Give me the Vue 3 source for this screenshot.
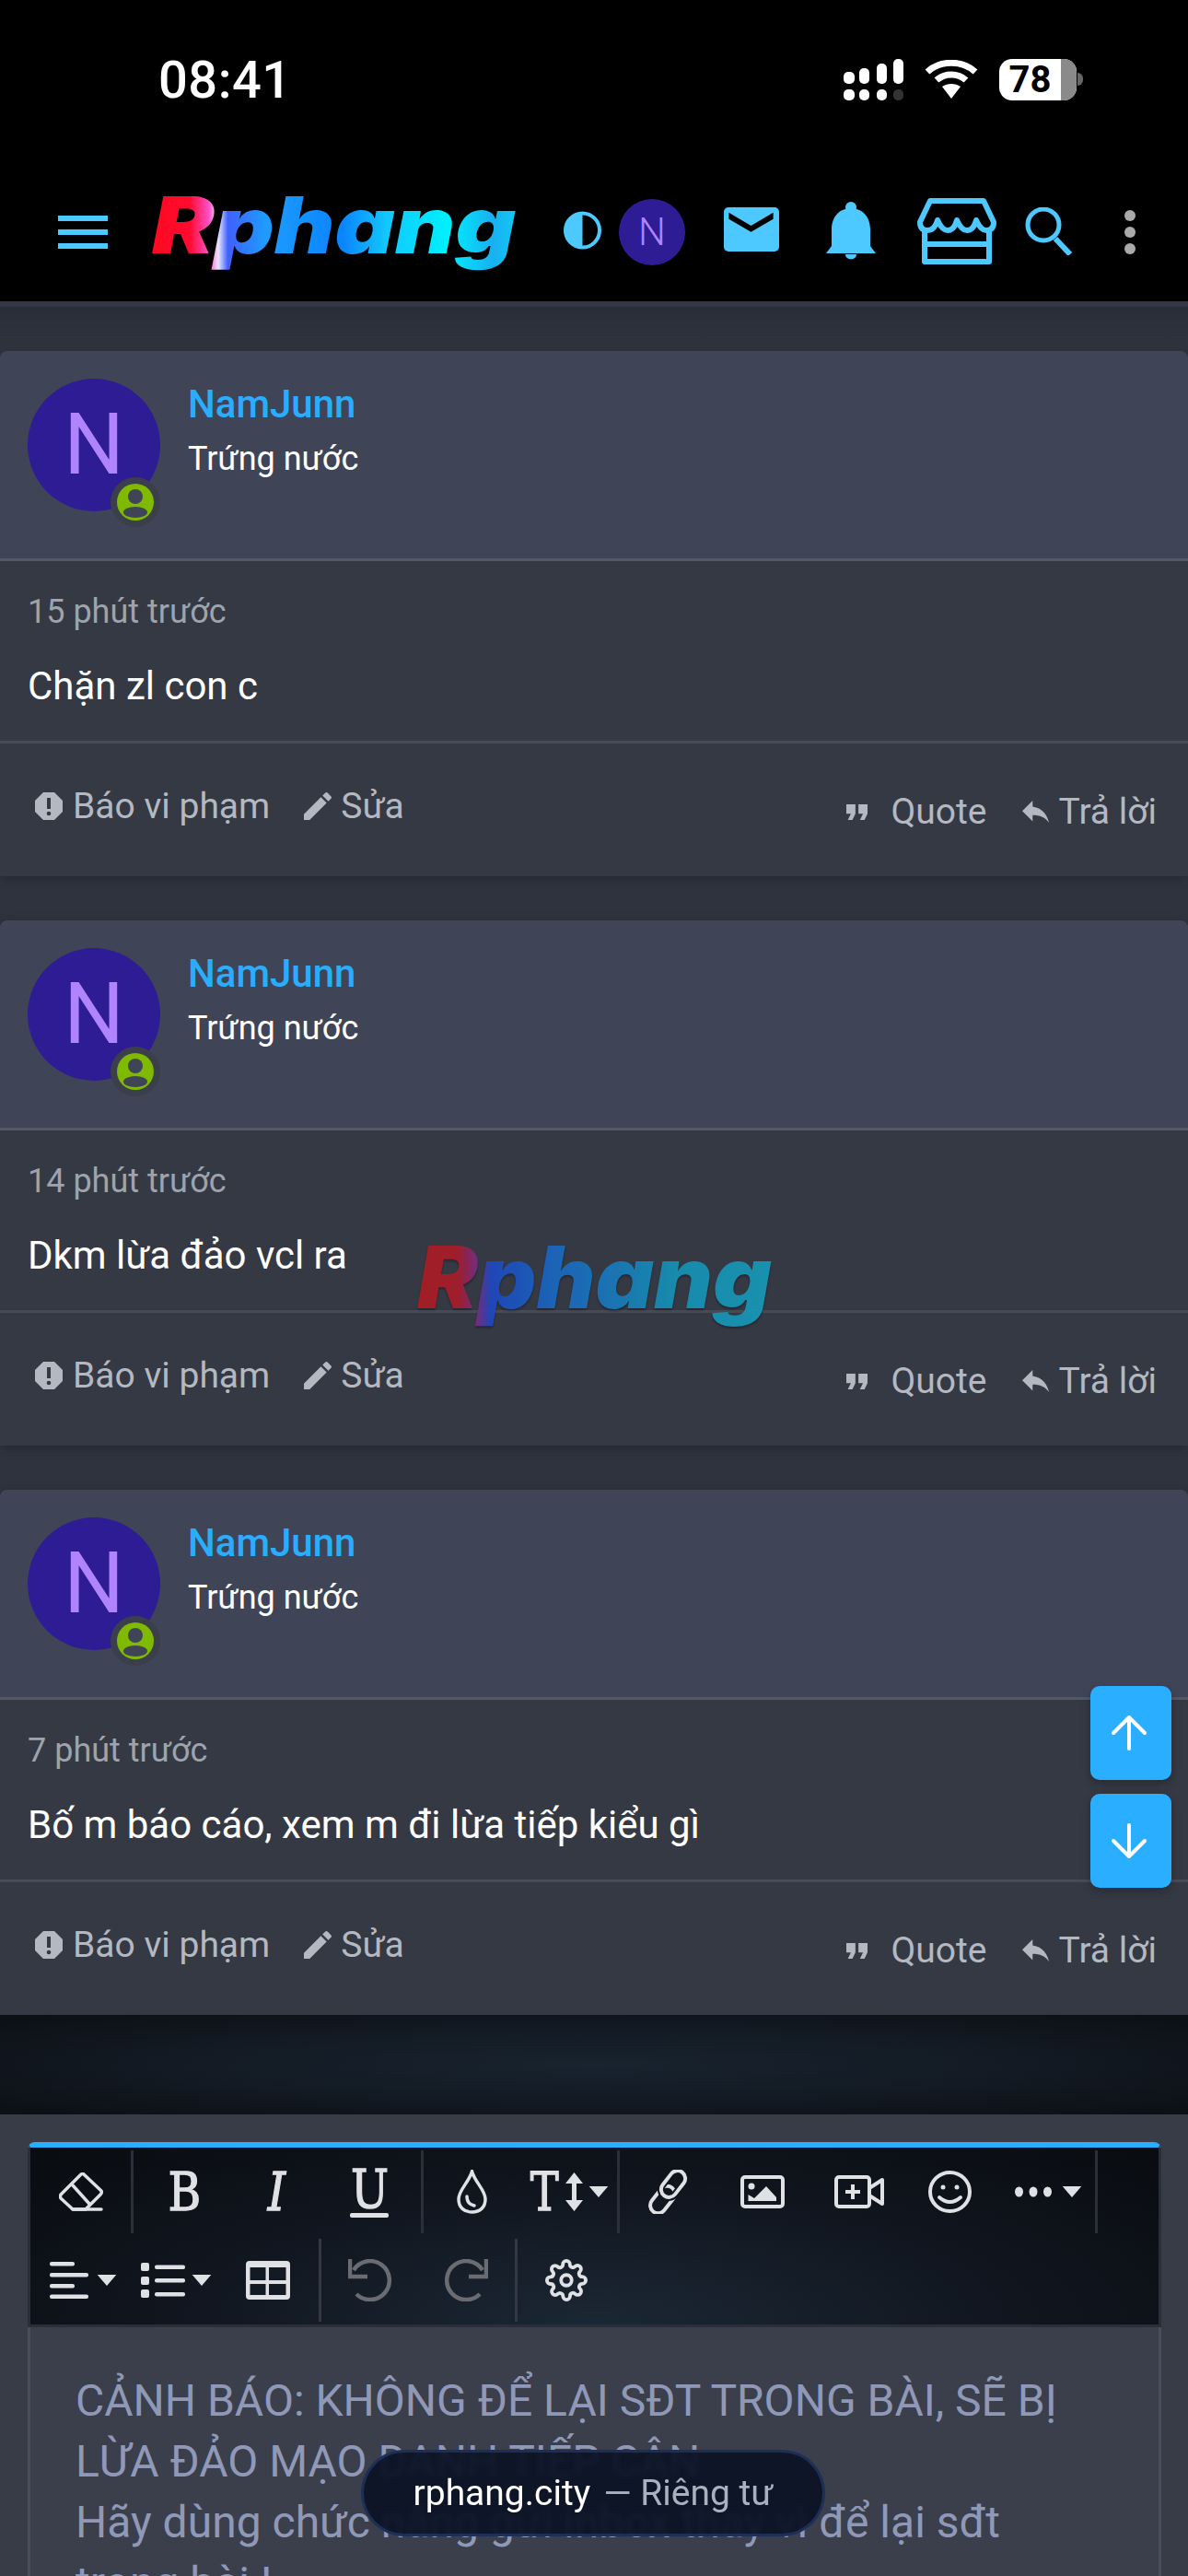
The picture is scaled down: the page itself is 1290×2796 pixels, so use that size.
<script setup>
const posts = [
  { id: 1, time: '15 phút trước', text: 'Chặn zl con c' },
  { id: 2, time: '14 phút trước', text: 'Dkm lừa đảo vcl ra' },
  { id: 3, time: '7 phút trước', text: 'Bố m báo cáo, xem m đi lừa tiếp kiểu gì' }
]
const gearPath = 'M19.4 15a1.65 1.65 0 0 0 .33 1.82l.06.06a2 2 0 0 1 0 2.83 2 2 0 0 1-2.83 0l-.06-.06a1.65 1.65 0 0 0-1.82-.33 1.65 1.65 0 0 0-1 1.51V21a2 2 0 0 1-2 2 2 2 0 0 1-2-2v-.09A1.65 1.65 0 0 0 9 19.4a1.65 1.65 0 0 0-1.82.33l-.06.06a2 2 0 0 1-2.83 0 2 2 0 0 1 0-2.83l.06-.06a1.65 1.65 0 0 0 .33-1.82 1.65 1.65 0 0 0-1.51-1H3a2 2 0 0 1-2-2 2 2 0 0 1 2-2h.09A1.65 1.65 0 0 0 4.6 9a1.65 1.65 0 0 0-.33-1.82l-.06-.06a2 2 0 0 1 0-2.83 2 2 0 0 1 2.83 0l.06.06a1.65 1.65 0 0 0 1.82.33H9a1.65 1.65 0 0 0 1-1.51V3a2 2 0 0 1 2-2 2 2 0 0 1 2 2v.09a1.65 1.65 0 0 0 1 1.51 1.65 1.65 0 0 0 1.82-.33l.06-.06a2 2 0 0 1 2.83 0 2 2 0 0 1 0 2.83l-.06.06a1.65 1.65 0 0 0-.33 1.82V9a1.65 1.65 0 0 0 1.51 1H21a2 2 0 0 1 2 2 2 2 0 0 1-2 2h-.09a1.65 1.65 0 0 0-1.51 1z'
</script>

<template>
  <div class="page">
    <div class="status">
      <span class="time">08:41</span>
      <div class="status-icons">
        <svg width="65" height="45" viewBox="0 0 65 45" fill="#fff">
          <rect x="0" y="14" width="12" height="13" rx="5"/>
          <rect x="17" y="10" width="11" height="17" rx="5"/>
          <rect x="36" y="5" width="11" height="22" rx="5"/>
          <rect x="54" y="0" width="11" height="27" rx="5"/>
          <rect x="0" y="33" width="12" height="12" rx="5"/>
          <rect x="17" y="33" width="11" height="12" rx="5"/>
          <rect x="36" y="33" width="11" height="12" rx="5"/>
          <rect x="54" y="33" width="11" height="12" rx="5" fill="#333"/>
        </svg>
        <svg class="wifi" width="58" height="42" viewBox="0 0 58 42" fill="none" stroke="#fff" stroke-width="7">
          <path d="M3 13 C17 0 41 0 55 13"/>
          <path d="M13 22 C22 14 36 14 45 22"/>
          <path d="M29 42 L19 29 C25 25 33 25 39 29 Z" fill="#fff" stroke="none"/>
        </svg>
        <div class="battery">
          <span class="battery-num">78</span>
          <span class="battery-rest"></span>
        </div>
        <span class="battery-nub"></span>
      </div>
    </div>

    <header class="topbar">
      <div class="burger"><i></i><i></i><i></i></div>
      <div class="logo-box"><span class="logo">Rphang</span></div>
      <svg class="ic-contrast" width="41" height="42" viewBox="0 0 41 42">
        <circle cx="20.5" cy="21" r="18.5" fill="none" stroke="#4dc9ff" stroke-width="4"/>
        <path d="M20.5 2 A18.5 19 0 0 0 20.5 40 Z" fill="#4dc9ff"/>
      </svg>
      <div class="top-avatar">N</div>
      <svg class="ic-mail" width="60" height="48" viewBox="0 0 60 48">
        <rect width="60" height="48" rx="5" fill="#4dc9ff"/>
        <path d="M5.4 5.7 L29.5 20 L53.6 5.7 V12.7 L29.5 26.7 L5.4 12.7 Z" fill="#000"/>
      </svg>
      <svg class="ic-bell" width="54" height="63" viewBox="0 0 54 63" fill="#4dc9ff">
        <circle cx="27" cy="6" r="6"/>
        <path d="M6 48 V30 C6 16 15 7 27 7 C39 7 48 16 48 30 V48 L54 56 H0 Z"/>
        <path d="M21 57 H33 C33 64 21 64 21 57 Z"/>
      </svg>
      <svg class="ic-store" width="86" height="72" viewBox="0 0 86 72" fill="none" stroke="#4dc9ff" stroke-width="6" stroke-linejoin="round">
        <path d="M3 26 Q3 35 11 35 Q19 35 22 24 Q27 35 33 35 Q40 35 43 24 Q48 35 54 35 Q61 35 64 24 Q69 35 75 35 Q83 35 83 26 L72 3 H14 Z"/>
        <path d="M8 36 V69 H78 V36 M8 50 H78"/>
      </svg>
      <svg class="ic-search" width="52" height="52" viewBox="0 0 52 52" fill="none" stroke="#4dc9ff">
        <ellipse cx="20" cy="19" rx="17" ry="17" stroke-width="5"/>
        <path d="M33 34 L49 51" stroke-width="6"/>
      </svg>
      <svg class="ic-dots" width="12" height="48" viewBox="0 0 12 48" fill="#aaa">
        <circle cx="6" cy="6" r="6"/><circle cx="6" cy="24" r="6"/><circle cx="6" cy="42" r="6"/>
      </svg>
    </header>

    <main class="thread">
      <article v-for="p in posts" :key="p.id" class="post">
        <div class="post-head">
          <div class="avatar">
            N
            <span class="badge">
              <svg width="40" height="40" viewBox="0 0 40 40">
                <circle cx="20" cy="20" r="20" fill="#7fba00"/>
                <circle cx="20" cy="14" r="8" fill="#3f4557"/>
                <ellipse cx="20" cy="31" rx="13" ry="6" fill="#3f4557"/>
              </svg>
            </span>
          </div>
          <div class="user">
            <div class="name">NamJunn</div>
            <div class="rank">Trứng nước</div>
          </div>
        </div>
        <div class="post-body">
          <div class="when">{{ p.time }}</div>
          <div class="msg">{{ p.text }}</div>
        </div>
        <div class="post-foot">
          <div class="acts acts-left">
            <span class="act">
              <svg width="30" height="30" viewBox="0 0 30 30">
                <path d="M9 0 H21 L30 9 V21 L21 30 H9 L0 21 V9 Z" fill="#b4b8c0"/>
                <rect x="13" y="6" width="4" height="12" fill="#353944"/>
                <circle cx="15" cy="23" r="2.3" fill="#353944"/>
              </svg>
              Báo vi phạm
            </span>
            <span class="act act-edit">
              <svg width="30" height="30" viewBox="3 3 18 18" fill="#b4b8c0">
                <path d="M3 17.25V21h3.75L17.81 9.94l-3.75-3.75L3 17.25zM20.71 7.04c.39-.39.39-1.02 0-1.41l-2.34-2.34c-.39-.39-1.02-.39-1.41 0l-1.83 1.83 3.75 3.75 1.83-1.83z"/>
              </svg>
              Sửa
            </span>
          </div>
          <div class="acts acts-right">
            <span class="act act-quote">
              <svg width="23" height="17" viewBox="5 7 14 10" preserveAspectRatio="none" fill="#b4b8c0">
                <path d="M6 17h3l2-4V7H5v6h3zm8 0h3l2-4V7h-6v6h3z"/>
              </svg>
              Quote
            </span>
            <span class="act act-reply">
              <svg width="29" height="24" viewBox="3 5 18 15" preserveAspectRatio="none" fill="#b4b8c0">
                <path d="M10 9V5l-7 7 7 7v-4.1c5 0 8.5 1.6 11 5.1-1-5-4-10-11-11z"/>
              </svg>
              Trả lời
            </span>
          </div>
        </div>
      </article>
    </main>

    <div class="band"></div>

    <section class="panel">
      <div class="editor">
        <div class="toolbar">
          <div class="tb-row">
            <div class="tb-group">
              <span class="tb w109">
                <svg width="48" height="42" viewBox="0 0 48 42" fill="none" stroke="#e0e1e5" stroke-width="3.5" stroke-linejoin="round" stroke-linecap="round">
                  <path d="M27 2 L46 20 Q47 22 45 24 L29 40 H15 L2 28 Q1 26 2 24 L24 2 Q26 1 27 2 Z"/>
                  <path d="M15 14 L33 34"/>
                  <path d="M15 40 H46"/>
                </svg>
              </span>
            </div>
            <div class="tb-group">
              <span class="tb w110"><span class="glyph">B</span></span>
              <span class="tb w90"><span class="glyph glyph-i">I</span></span>
              <span class="tb w112 u-tool"><span class="glyph">U</span><i class="u-line"></i></span>
            </div>
            <div class="tb-group">
              <span class="tb w104">
                <svg width="33" height="48" viewBox="0 0 33 48" fill="none" stroke="#e0e1e5" stroke-width="3.5" stroke-linecap="round">
                  <path d="M16.5 2 C13 14 2 22 2 32 C2 41 8 46 16.5 46 C25 46 31 41 31 32 C31 22 20 14 16.5 2 Z"/>
                  <path d="M11 29 C11 35 14 38 19 39"/>
                </svg>
              </span>
              <span class="tb w106 size-tool">
                <span class="glyph glyph-t">T</span>
                <svg width="19" height="42" viewBox="0 0 19 42" fill="#e0e1e5">
                  <path d="M9.5 0 L19 12 H12 V30 H19 L9.5 42 L0 30 H7 V12 H0 Z"/>
                </svg>
                <svg width="24" height="12" viewBox="0 0 24 14" fill="#e0e1e5"><path d="M0 0 H24 L12 14 Z"/></svg>
              </span>
            </div>
            <div class="tb-group">
              <span class="tb w106">
                <svg class="ic-link" width="49" height="48" viewBox="0 0 49 48" fill="none" stroke-width="4">
                  <rect x="3" y="24" width="33" height="17" rx="8.5" transform="rotate(-52 19.5 32.5)" stroke="#e0e1e5"/>
                  <rect x="15" y="7" width="32" height="17" rx="8.5" transform="rotate(-52 31 15.5)" stroke="#10151e" stroke-width="8"/>
                  <rect x="15" y="7" width="32" height="17" rx="8.5" transform="rotate(-52 31 15.5)" stroke="#e0e1e5"/>
                </svg>
              </span>
              <span class="tb w98">
                <svg width="48" height="36" viewBox="0 0 48 36">
                  <rect x="2" y="2" width="44" height="32" rx="3" fill="none" stroke="#e0e1e5" stroke-width="4"/>
                  <circle cx="12" cy="12" r="3.5" fill="#e0e1e5"/>
                  <path d="M8.5 28 V21 L15 25 L28 12 L39 24 V28 Z" fill="#e0e1e5"/>
                </svg>
              </span>
              <span class="tb w112">
                <svg width="54" height="36" viewBox="0 0 54 36" fill="none" stroke="#e0e1e5" stroke-width="4" stroke-linejoin="round">
                  <rect x="2" y="2" width="36" height="32" rx="3"/>
                  <path d="M38 14 L52 5 V31 L38 22"/>
                  <path d="M20 10 V26 M12 18 H28"/>
                </svg>
              </span>
              <span class="tb w84">
                <svg width="47" height="46" viewBox="0 0 47 46" fill="none" stroke="#e0e1e5" stroke-width="4" stroke-linecap="round">
                  <ellipse cx="23.5" cy="23" rx="21.5" ry="21"/>
                  <circle cx="16" cy="18" r="2.5" fill="#e0e1e5" stroke="none"/>
                  <circle cx="31" cy="18" r="2.5" fill="#e0e1e5" stroke="none"/>
                  <path d="M12 29 Q23.5 39 35 29"/>
                </svg>
              </span>
              <span class="tb w116 more-tool">
                <svg width="40" height="12" viewBox="0 0 40 12" fill="#e0e1e5">
                  <ellipse cx="4.5" cy="6" rx="4.5" ry="5.5"/><ellipse cx="20" cy="6" rx="4.5" ry="5.5"/><ellipse cx="35.5" cy="6" rx="4.5" ry="5.5"/>
                </svg>
                <svg width="24" height="12" viewBox="0 0 24 14" fill="#e0e1e5"><path d="M0 0 H24 L12 14 Z"/></svg>
              </span>
            </div>
          </div>
          <div class="tb-row">
            <div class="tb-group">
              <span class="tb w116 drop-tool">
                <svg width="42" height="40" viewBox="0 0 42 40" fill="#e0e1e5">
                  <rect width="27" height="4.5" rx="2"/><rect y="12" width="42" height="4.5" rx="2"/>
                  <rect y="24" width="27" height="4.5" rx="2"/><rect y="35.5" width="42" height="4.5" rx="2"/>
                </svg>
                <svg width="24" height="12" viewBox="0 0 24 14" fill="#e0e1e5"><path d="M0 0 H24 L12 14 Z"/></svg>
              </span>
              <span class="tb w86 list-tool">
                <svg width="48" height="40" viewBox="0 0 48 40" fill="#e0e1e5">
                  <rect y="1" width="9" height="9" rx="2"/><rect y="16" width="9" height="9" rx="2"/><rect y="30" width="9" height="9" rx="2"/>
                  <rect x="15" y="3.5" width="33" height="4.5" rx="2"/><rect x="15" y="18" width="33" height="4.5" rx="2"/><rect x="15" y="33" width="33" height="4.5" rx="2"/>
                </svg>
                <svg width="24" height="12" viewBox="0 0 24 14" fill="#e0e1e5"><path d="M0 0 H24 L12 14 Z"/></svg>
              </span>
              <span class="tb w111">
                <svg width="48" height="42" viewBox="0 0 48 42">
                  <rect width="48" height="42" rx="4" fill="#e0e1e5"/>
                  <rect x="4.5" y="7" width="17" height="14" fill="#141a24"/><rect x="25" y="7" width="18.5" height="14" fill="#141a24"/>
                  <rect x="4.5" y="25" width="17" height="12" fill="#141a24"/><rect x="25" y="25" width="18.5" height="12" fill="#141a24"/>
                </svg>
              </span>
            </div>
            <div class="tb-group">
              <span class="tb w105">
                <svg width="47" height="46" viewBox="0 0 47 46" fill="none" stroke="#6a6c72" stroke-width="4.5">
                  <path d="M2 0 V19 H21"/>
                  <path d="M6 12 A21 21 0 1 1 9 38"/>
                </svg>
              </span>
              <span class="tb w105">
                <svg width="47" height="46" viewBox="0 0 47 46" fill="none" stroke="#6a6c72" stroke-width="4.5">
                  <path d="M45 0 V19 H26"/>
                  <path d="M41 12 A21 21 0 1 0 38 38"/>
                </svg>
              </span>
            </div>
            <div class="tb-group tb-last">
              <span class="tb w106">
                <svg width="46" height="46" viewBox="0 0 24 24" fill="none" stroke="#e0e1e5" stroke-width="2">
                  <circle cx="12" cy="12" r="3"/>
                  <path :d="gearPath"/>
                </svg>
              </span>
            </div>
          </div>
        </div>
        <div class="placeholder">
          <p>CẢNH BÁO: KHÔNG ĐỂ LẠI SĐT TRONG BÀI, SẼ BỊ LỪA ĐẢO MẠO DANH TIẾP CẬN</p>
          <p>Hãy dùng chức năng gửi inbox thay vì để lại sđt trong bài !</p>
        </div>
      </div>
    </section>

    <div class="mark-box"><span class="logo logo-mark">Rphang</span></div>

    <div class="jump">
      <button class="jump-btn" aria-label="Lên">
        <svg width="40" height="40" viewBox="0 0 40 40" fill="none" stroke="#fff" stroke-width="4" stroke-linecap="round" stroke-linejoin="round">
          <path d="M20 3 V37 M3 20 L20 3 L37 20"/>
        </svg>
      </button>
      <button class="jump-btn" aria-label="Xuống">
        <svg width="40" height="40" viewBox="0 0 40 40" fill="none" stroke="#fff" stroke-width="4" stroke-linecap="round" stroke-linejoin="round">
          <path d="M20 3 V37 M3 20 L20 37 L37 20"/>
        </svg>
      </button>
    </div>

    <div class="toast"><span class="toast-host">rphang.city</span><span class="toast-rest">— Riêng tư</span></div>
  </div>
</template>

<style scoped>
.page {
  position: relative;
  width: 1290px;
  height: 2796px;
  overflow: hidden;
  background: #2f333e;
  font-family: Roboto, "Liberation Sans", sans-serif;
  color: #fff;
}

/* status bar */
.status {
  height: 170px;
  background: #000;
  display: flex;
  justify-content: space-between;
  padding: 64px 114px 0 172px;
  box-sizing: border-box;
}
.time {
  font-size: 56px;
  font-weight: 500;
  letter-spacing: .5px;
  line-height: 47px;
}
.status-icons {
  display: flex;
  align-items: flex-start;
}
.wifi { margin: 1px 23px 0; }
.battery {
  width: 84px;
  height: 45px;
  border-radius: 14px;
  overflow: hidden;
  display: flex;
  background: #fff;
}
.battery-num {
  width: 67px;
  color: #000;
  font-size: 40px;
  font-weight: 700;
  line-height: 45px;
  text-align: center;
}
.battery-rest { flex: 1; background: #8a8a8a; }
.battery-nub {
  width: 6px;
  height: 14px;
  margin: 15px 0 0 1px;
  border-radius: 0 6px 6px 0;
  background: #666;
}

/* top bar */
.topbar {
  height: 157px;
  background: #000;
  position: relative;
  display: flex;
  align-items: flex-start;
}
.burger {
  margin: 64px 0 0 63px;
  width: 54px;
  display: flex;
  flex-direction: column;
  gap: 9px;
}
.burger i { display: block; height: 6px; background: #4dc9ff; }
.logo-box {
  margin: 25px 0 0 48px;
  width: 396px;
  height: 100px;
  flex: none;
}
.logo {
  display: inline-block;
  font-family: Inter, "DejaVu Sans", sans-serif;
  font-weight: 900;
  font-style: italic;
  font-size: 85px;
  line-height: 100px;
  padding-right: 14px;
  color: transparent;
  -webkit-background-clip: text;
  background-clip: text;
  transform-origin: 0 0;
  transform: scaleX(1.19);
  background-image: linear-gradient(90deg, #ff0a20 0%, #ff0a30 10%, #ff50c8 15%, #e8e8ff 17.5%, #4060ff 20%, #1e9cff 30%, #0a84ff 50%, #12c8ff 62%, #00f0ff 78%, #18b0f0 90%, #10d8f8 100%);
}
.ic-contrast { margin: 59px 0 0 51px; flex: none; }
.top-avatar {
  margin: 46px 0 0 19px;
  width: 72px;
  height: 72px;
  flex: none;
  border-radius: 50%;
  background: #2e1c94;
  color: #b083ff;
  font-size: 42px;
  font-weight: 300;
  line-height: 72px;
  text-align: center;
}
.ic-mail { margin: 55px 0 0 42px; flex: none; }
.ic-bell { margin: 49px 0 0 51px; flex: none; }
.ic-store { margin: 45px 0 0 45px; flex: none; }
.ic-search { margin: 55px 0 0 31px; flex: none; }
.ic-dots { margin: 58px 0 0 56px; flex: none; }

/* thread */
.thread {
  border-top: 6px solid #343844;
  padding-top: 48px;
  background: linear-gradient(#292d38, #2f333e 40px);
}
.post {
  margin-bottom: 48px;
  border-radius: 8px 8px 0 0;
  background: #353944;
  box-shadow: 0 3px 12px rgba(0, 0, 0, .22);
}
.post:last-child { margin-bottom: 0; }
.post-head {
  height: 225px;
  box-sizing: border-box;
  padding: 30px 30px 0;
  display: flex;
  gap: 30px;
  background: #3f4557;
  border-radius: 8px 8px 0 0;
}
.avatar {
  position: relative;
  width: 144px;
  height: 144px;
  flex: none;
  border-radius: 50%;
  background: #2e1c94;
  color: #b083ff;
  font-size: 92px;
  line-height: 144px;
  text-align: center;
}
.badge {
  position: absolute;
  left: 90px;
  top: 107px;
  width: 54px;
  height: 54px;
  box-sizing: border-box;
  padding: 7px;
  border-radius: 50%;
  background: #3b3f4c;
  display: flex;
}
.user { margin-top: -2px; }
.name {
  font-size: 42px;
  font-weight: 500;
  line-height: 60px;
  color: #29aeff;
}
.rank {
  font-size: 36px;
  line-height: 59px;
}
.post-body {
  border-top: 3px solid #535866;
  border-bottom: 3px solid #474b57;
  padding: 25px 30px 30px;
}
.when {
  font-size: 36px;
  line-height: 60px;
  color: #9ea3ad;
}
.msg {
  margin-top: 21px;
  margin-bottom: -1px;
  font-size: 42px;
  line-height: 60px;
}
.post-foot {
  height: 144px;
  display: flex;
  justify-content: space-between;
  padding: 0 34px 0 38px;
}
.acts {
  display: flex;
  color: #b4b8c0;
  font-size: 39px;
  line-height: 48px;
}
.acts-left { padding-top: 44px; }
.acts-right { padding-top: 50px; }
.act {
  display: flex;
  align-items: center;
  height: 48px;
  gap: 11px;
}
.act-edit { margin-left: 37px; gap: 10px; }
.act-quote { gap: 26px; }
.act-reply { margin-left: 38px; }

/* dark band */
.toolbar {
  background: radial-gradient(ellipse farthest-corner at 50% 100%, #1b2734 0%, #10151e 55%, #090b0f 100%);
}
.band {
  height: 108px;
  background: radial-gradient(ellipse farthest-corner at 50% 50%, #18232f 0%, #121922 55%, #0c0f14 100%);
}

/* editor */
.panel {
  padding: 30px 29px 0 30px;
  background: #383c47;
  height: 501px;
  box-sizing: border-box;
}
.editor {
  border-top: 6px solid #29aeff;
  border-radius: 8px 8px 0 0;
  border-left: 3px solid #4a4e59;
  border-right: 3px solid #4a4e59;
  background: #3b3f4b;
}
.toolbar {
  border-bottom: 3px solid #2a2e38;
  box-shadow: -3px 0 0 #2a2e38, 3px 0 0 #2a2e38;
}
.tb-row {
  height: 96px;
  display: flex;
}
.tb-group {
  display: flex;
  height: 90px;
  margin-top: 3px;
  border-right: 3px solid #2b2f3a;
}
.tb-row + .tb-row .tb-group { border-right-color: #333843; }
.tb-group.tb-last { border-right: 0; }
.tb {
  position: relative;
  display: flex;
  align-items: center;
  justify-content: center;
  height: 90px;
  flex: none;
}
.w84 { width: 84px; }
.w86 { width: 86px; }
.w90 { width: 90px; }
.w98 { width: 98px; }
.w104 { width: 104px; }
.w105 { width: 105px; }
.w106 { width: 106px; }
.w109 { width: 109px; }
.w110 { width: 110px; }
.w111 { width: 111px; }
.w112 { width: 112px; }
.w116 { width: 116px; }
.glyph {
  display: inline-block;
  font-family: "DejaVu Serif", serif;
  font-weight: 400;
  font-size: 58px;
  line-height: 48px;
  color: #e0e1e5;
  -webkit-text-stroke: 1.3px #e0e1e5;
  transform: scaleX(.84);
}
.glyph-i { font-style: italic; }
.glyph-t { transform: scaleX(.8); margin: 0 -2px 0 -2px; }
.u-tool { flex-direction: column; gap: 2px; }
.u-line { display: block; width: 42px; height: 5px; border-radius: 2px; background: #e0e1e5; }
.ic-link { margin-left: -4px; }
.size-tool { gap: 5px; padding-left: 2px; box-sizing: border-box; }
.more-tool { justify-content: flex-start; padding-left: 29px; box-sizing: border-box; gap: 10px; }
.drop-tool { gap: 8px; }
.list-tool { gap: 6px; }
.placeholder {
  padding: 47px 80px 0 49px;
  font-size: 48px;
  line-height: 66px;
  color: #8f99b7;
}
.placeholder p { margin: 0; }

/* floating bits */
.mark-box {
  position: absolute;
  left: 453px;
  top: 1331px;
  width: 384px;
  height: 110px;
  opacity: .92;
  filter: drop-shadow(0 2px 1px rgba(0, 0, 0, .35));
}
.logo-mark {
  font-size: 93px;
  line-height: 110px;
  transform: scaleX(1.06);
  background-image: linear-gradient(90deg, #ab1c22 0%, #a81c2a 11%, #7c2a80 16%, #1e48c0 20%, #1a66c0 36%, #1878bc 52%, #1592b4 70%, #189ab8 100%);
}
.jump {
  position: absolute;
  left: 1184px;
  top: 1830px;
  display: flex;
  flex-direction: column;
  gap: 15px;
}
.jump-btn {
  width: 88px;
  height: 102px;
  padding: 0 4px 0 0;
  border: 0;
  border-radius: 10px;
  background: #2aaeff;
  box-shadow: 0 4px 10px rgba(0, 0, 0, .25);
  display: flex;
  align-items: center;
  justify-content: center;
  margin: 0;
}
.toast {
  position: absolute;
  left: 392px;
  top: 2659px;
  width: 504px;
  height: 94px;
  box-sizing: border-box;
  border: 3px solid rgba(34, 52, 100, .8);
  border-radius: 47px;
  background: rgba(10, 17, 36, .92);
  backdrop-filter: blur(3px);
  display: flex;
  align-items: center;
  justify-content: center;
  gap: 14px;
  font-size: 39px;
}
.toast-rest { color: #a9b0be; }
</style>

<style>
html, body { margin: 0; background: #000; }
</style>
